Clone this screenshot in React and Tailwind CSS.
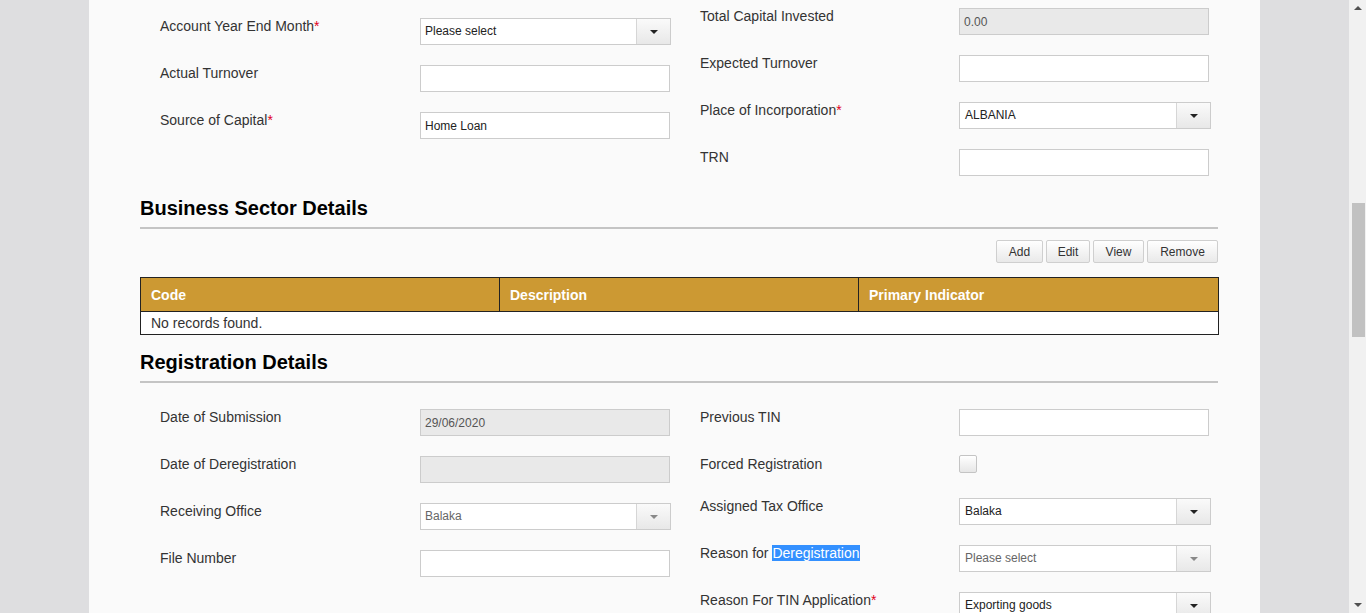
import React from 'react';

const font = { fontFamily: '"Liberation Sans", Arial, sans-serif' };

function Label({ text, req, children, w = 'w-[259px]' }) {
  return (
    <div className={`${w} shrink-0 text-[14px] leading-4 text-[#333]`}>
      {children || text}
      {req && <span className="text-[#e0001b]">*</span>}
    </div>
  );
}

function TextBox({ value, disabled }) {
  return (
    <div className={`w-[250px] h-[27px] border border-[#cccccc] flex items-center px-1 text-[12px] ${disabled ? 'bg-[#e9e9e9] text-[#555]' : 'bg-white text-[#222]'}`}>
      {value}
    </div>
  );
}

function Select({ value, disabled, wide }) {
  return (
    <div className={`${wide ? 'w-[252px] pl-[1px]' : 'w-[251px]'} h-[27px] border border-[#cccccc] flex bg-white`}>
      <div className={`flex-1 flex items-center px-1 pb-[2px] text-[12px] ${disabled ? 'text-[#666]' : 'text-[#222]'}`}>{value}</div>
      <div className="w-[34px] border-l border-[#d6d6d6] bg-gradient-to-b from-[#fafafa] to-[#e8e8e8] flex items-center justify-center">
        <div className={`w-0 h-0 border-l-[4px] border-r-[4px] border-t-[4px] border-l-transparent border-r-transparent ${disabled ? 'border-t-[#888]' : 'border-t-[#222]'}`} />
      </div>
    </div>
  );
}

function Row({ label, req, children, mb = 'mb-5', labelNode, lw }) {
  return (
    <div className={`flex items-start ${mb}`}>
      <Label text={label} req={req} w={lw}>{labelNode}</Label>
      {children}
    </div>
  );
}

function Heading({ children }) {
  return (
    <div>
      <h2 className="text-[20px] leading-6 font-bold text-black">{children}</h2>
      <div className="mt-[7px] h-[2px] bg-[#c4c4c4] w-[1078px]" />
    </div>
  );
}

function Btn({ children, w }) {
  return (
    <button className={`${w} h-[23px] border border-[#cfcfcf] bg-gradient-to-b from-white to-[#e9e9e9] text-[12px] text-[#333] rounded-[2px]`}>
      {children}
    </button>
  );
}

export default function App() {
  return (
    <div className="h-[613px] overflow-hidden flex bg-[#dedee0]" style={font}>
      <div className="w-[89px] shrink-0" />
      <div className="w-[1171px] shrink-0 bg-[#fafafa] pl-[51px]">
        {/* top rows */}
        <div className="flex pl-[20px] pt-[8px]">
          <div className="w-[540px] pt-[10px]">
            <Row lw="w-[260px]" label="Account Year End Month" req><Select value="Please select" /></Row>
            <Row lw="w-[260px]" label="Actual Turnover"><TextBox /></Row>
            <Row lw="w-[260px]" label="Source of Capital" req><TextBox value="Home Loan" /></Row>
          </div>
          <div>
            <Row label="Total Capital Invested"><TextBox value="0.00" disabled /></Row>
            <Row label="Expected Turnover"><TextBox /></Row>
            <Row label="Place of Incorporation" req><Select value="ALBANIA" wide /></Row>
            <Row label="TRN" mb="mb-0"><TextBox /></Row>
          </div>
        </div>

        <div className="mt-[20px]">
          <Heading>Business Sector Details</Heading>
        </div>

        <div className="w-[1078px] flex justify-end gap-[3px] mt-[11px]">
          <Btn w="w-[47px]">Add</Btn>
          <Btn w="w-[44px]">Edit</Btn>
          <Btn w="w-[51px]">View</Btn>
          <Btn w="w-[71px]">Remove</Btn>
        </div>

        <table className="mt-[14px] w-[1079px] border border-[#222] border-collapse text-[14px] table-fixed">
          <thead>
            <tr className="bg-[#cc9933] text-white h-[34px]">
              <th className="w-[359px] text-left font-bold px-[10px] pt-[2px] border border-[#222]">Code</th>
              <th className="w-[359px] text-left font-bold px-[10px] pt-[2px] border border-[#222]">Description</th>
              <th className="text-left font-bold px-[10px] pt-[2px] border border-[#222]">Primary Indicator</th>
            </tr>
          </thead>
          <tbody>
            <tr className="h-[23px]">
              <td colSpan={3} className="px-[10px] text-[#333] bg-white leading-4">No records found.</td>
            </tr>
          </tbody>
        </table>

        <div className="mt-[15px]">
          <Heading>Registration Details</Heading>
        </div>

        <div className="flex pl-[20px] pt-[26px]">
          <div className="w-[540px]">
            <Row lw="w-[260px]" label="Date of Submission"><TextBox value="29/06/2020" disabled /></Row>
            <Row lw="w-[260px]" label="Date of Deregistration"><TextBox disabled /></Row>
            <Row lw="w-[260px]" label="Receiving Office"><Select value="Balaka" disabled /></Row>
            <Row lw="w-[260px]" label="File Number"><TextBox /></Row>
          </div>
          <div>
            <Row label="Previous TIN" mb="mb-[19px]"><TextBox /></Row>
            <div className="flex items-start mb-[25px]">
              <div className="w-[259px] shrink-0 text-[14px] leading-4 text-[#333] pt-[1px]">Forced Registration</div>
              <div className="w-[18px] h-[18px] border border-[#c4c4c4] rounded-[2px] bg-gradient-to-b from-white to-[#e6e6e6]" />
            </div>
            <div className="flex items-start mb-5">
              <div className="w-[259px] shrink-0 text-[14px] leading-4 text-[#333]">Assigned Tax Office</div>
              <Select value="Balaka" wide />
            </div>
            <Row labelNode={<>Reason for <span className="bg-[#3390ff] text-white">Deregistration</span></>}>
              <Select value="Please select" disabled wide />
            </Row>
            <Row label="Reason For TIN Application" req><Select value="Exporting goods" wide /></Row>
          </div>
        </div>
      </div>
      <div className="flex-1" />
      <div className="w-[17px] shrink-0 bg-[#f1f1f1] flex flex-col items-center">
        <div className="mt-[6px] w-0 h-0 border-l-[4px] border-r-[4px] border-b-[4px] border-l-transparent border-r-transparent border-b-[#505050]" />
        <div className="mt-[193px] w-[13px] h-[134px] bg-[#c1c1c1] ml-[2px]" />
        <div className="mt-auto mb-[6px] w-0 h-0 border-l-[4px] border-r-[4px] border-t-[4px] border-l-transparent border-r-transparent border-t-[#505050]" />
      </div>
    </div>
  );
}
